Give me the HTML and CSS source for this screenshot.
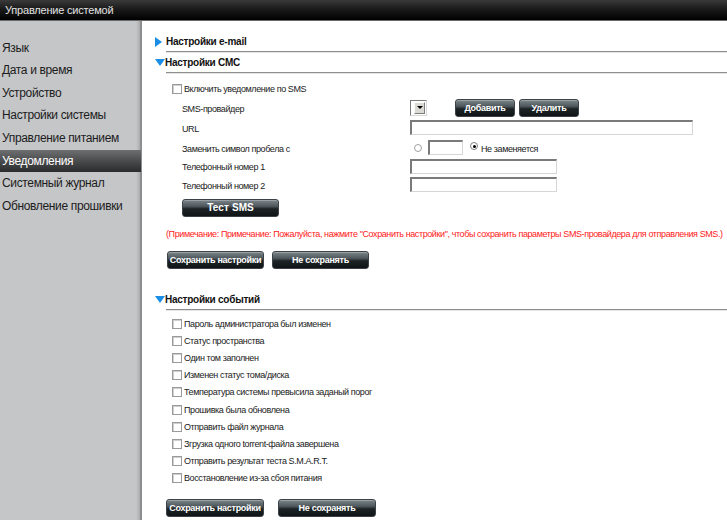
FILE: index.html
```html
<!DOCTYPE html>
<html lang="ru">
<head>
<meta charset="utf-8">
<title>Управление системой</title>
<link rel="stylesheet" href="styles.css">
</head>
<body>
<div class="page">
  <header class="topbar">Управление системой</header>
  <div class="layout">
    <nav class="sidebar">
      <div class="nav-item">Язык</div>
      <div class="nav-item">Дата и время</div>
      <div class="nav-item">Устройство</div>
      <div class="nav-item">Настройки системы</div>
      <div class="nav-item">Управление питанием</div>
      <div class="nav-item active">Уведомления</div>
      <div class="nav-item">Системный журнал</div>
      <div class="nav-item">Обновление прошивки</div>
    </nav>
    <main class="main">
      <section class="sec">
        <div class="sec-head"><span class="tri tri-right"></span><span class="sec-title">Настройки e-mail</span></div>
        <div class="rule"></div>
      </section>

      <section class="sec">
        <div class="sec-head open"><span class="tri tri-down"></span><span class="sec-title">Настройки СМС</span></div>
        <div class="rule"></div>
        <div class="check-row enable"><span class="cb"></span><span>Включить уведомление по SMS</span></div>
        <div class="form">
          <div class="frow r-provider">
            <span class="flabel">SMS-провайдер</span>
            <div class="fctrl">
              <span class="select"><span class="select-btn"><span class="arrow"></span></span></span>
              <span class="btn-pair">
                <button class="btn btn-add">Добавить</button>
                <button class="btn btn-add">Удалить</button>
              </span>
            </div>
          </div>
          <div class="frow r-url">
            <span class="flabel">URL</span>
            <div class="fctrl"><span class="input input-url"></span></div>
          </div>
          <div class="frow r-replace">
            <span class="flabel">Заменить символ пробела с</span>
            <div class="fctrl">
              <span class="radio"></span>
              <span class="input input-char"></span>
              <span class="radio checked"></span>
              <span class="radio-label">Не заменяется</span>
            </div>
          </div>
          <div class="frow r-phone1">
            <span class="flabel">Телефонный номер 1</span>
            <div class="fctrl"><span class="input input-phone"></span></div>
          </div>
          <div class="frow r-phone2">
            <span class="flabel">Телефонный номер 2</span>
            <div class="fctrl"><span class="input input-phone"></span></div>
          </div>
        </div>
        <div class="test-row"><button class="btn btn-test">Тест SMS</button></div>
        <p class="note">(Примечание: Примечание: Пожалуйста, нажмите "Сохранить настройки", чтобы сохранить параметры SMS-провайдера для отправления SMS.)</p>
        <div class="actions actions-sms">
          <button class="btn btn-wide">Сохранить настройки</button>
          <button class="btn btn-wide">Не сохранять</button>
        </div>
      </section>

      <section class="sec events">
        <div class="sec-head open"><span class="tri tri-down"></span><span class="sec-title">Настройки событий</span></div>
        <div class="rule"></div>
        <div class="event-list">
          <div class="check-row"><span class="cb"></span><span>Пароль администратора был изменен</span></div>
          <div class="check-row"><span class="cb"></span><span>Статус пространства</span></div>
          <div class="check-row"><span class="cb"></span><span>Один том заполнен</span></div>
          <div class="check-row"><span class="cb"></span><span>Изменен статус тома/диска</span></div>
          <div class="check-row"><span class="cb"></span><span>Температура системы превысила заданый порог</span></div>
          <div class="check-row"><span class="cb"></span><span>Прошивка была обновлена</span></div>
          <div class="check-row"><span class="cb"></span><span>Отправить файл журнала</span></div>
          <div class="check-row"><span class="cb"></span><span>Згрузка одного torrent-файла завершена</span></div>
          <div class="check-row"><span class="cb"></span><span>Отправить результат теста S.M.A.R.T.</span></div>
          <div class="check-row"><span class="cb"></span><span>Восстановление из-за сбоя питания</span></div>
        </div>
        <div class="actions actions-events">
          <button class="btn btn-wide2">Сохранить настройки</button>
          <button class="btn btn-wide2">Не сохранять</button>
        </div>
      </section>
    </main>
  </div>
</div>
</body>
</html>
```

FILE: styles.css
```css
* { box-sizing: border-box; }
html, body {
  margin: 0;
  padding: 0;
  width: 727px;
  height: 520px;
  overflow: hidden;
  background: #ffffff;
  font-family: "Liberation Sans", Arial, sans-serif;
  color: #1a1a1a;
}
.page {
  display: flex;
  flex-direction: column;
  height: 520px;
}
.topbar {
  height: 21px;
  flex: 0 0 21px;
  background: linear-gradient(#3a3a3a 0%, #1a1a1a 45%, #000000 100%);
  border-bottom: 1px solid #6a6a6a;
  color: #e2e2e2;
  font-size: 11px;
  letter-spacing: -0.2px;
  line-height: 20px;
  padding-left: 5px;
}
.layout {
  display: flex;
  flex: 1;
  min-height: 0;
}
.sidebar {
  width: 142px;
  flex: 0 0 142px;
  background: linear-gradient(to right, #c5c6c8 0, #c5c6c8 136px, #b9babc 138px, #a9aaac 140px, #8d8e90 140px, #8d8e90 142px);
  padding-top: 15.7px;
}
.nav-item {
  height: 22.6px;
  line-height: 22.6px;
  font-size: 12px;
  letter-spacing: -0.35px;
  padding-left: 2px;
  color: #1c1c1c;
  white-space: nowrap;
  width: 141px;
}
.nav-item.active {
  background: linear-gradient(#6e6f71 0%, #4a4b4d 50%, #2a2b2c 100%);
  color: #ffffff;
}
.main {
  flex: 1;
  padding-top: 11px;
  min-width: 0;
}
.sec-head {
  height: 19px;
  display: flex;
  align-items: center;
  padding-left: 13px;
  font-size: 10px;
  letter-spacing: -0.25px;
  font-weight: bold;
  color: #111;
}
.tri {
  display: inline-block;
  width: 0;
  height: 0;
}
.tri-right {
  border-top: 5px solid transparent;
  border-bottom: 5px solid transparent;
  border-left: 7px solid #1a8ee6;
  margin-right: 4px;
}
.tri-down {
  border-left: 5px solid transparent;
  border-right: 5px solid transparent;
  border-top: 7px solid #1a8ee6;
  margin-right: 0;
  margin-top: -1px;
}
.rule {
  margin-left: 24px;
  border-top: 1px solid #8e8e8e;
  border-bottom: 1px solid #e4e4e4;
  height: 0;
}
.check-row {
  display: flex;
  align-items: center;
  font-size: 9px;
  letter-spacing: -0.4px;
  color: #1a1a1a;
  margin-left: 30px;
  height: 18px;
}
.enable {
  margin-top: 6px;
}
.cb {
  width: 10px;
  height: 10px;
  border: 1px solid #9a9a9a;
  box-shadow: inset 1px 1px 0 #cfcfcf;
  background: #ffffff;
  margin-right: 2px;
  flex: 0 0 10px;
}
.form {
  margin-left: 40px;
  font-size: 9px;
  letter-spacing: -0.4px;
}
.frow {
  display: grid;
  grid-template-columns: 228px 1fr;
  align-items: center;
}
.flabel {
  padding-top: 2px;
}
.r-provider { height: 19px; }
.r-url { height: 21px; }
.r-replace { height: 19px; }
.r-phone1 { height: 18px; }
.r-phone2 { height: 19px; }
.fctrl {
  display: flex;
  align-items: center;
}
.select {
  width: 17px;
  height: 16px;
  border-top: 1px solid #7a7a7a;
  border-left: 1px solid #7a7a7a;
  border-right: 1px solid #d8d8d8;
  border-bottom: 1px solid #d8d8d8;
  background: #fff;
  display: flex;
  justify-content: flex-end;
  align-items: center;
  padding: 1px;
}
.select-btn {
  width: 11px;
  height: 12px;
  background: #dcdad4;
  border: 1px solid;
  border-color: #fafafa #7d7d7d #7d7d7d #fafafa;
  display: flex;
  align-items: center;
  justify-content: center;
}
.arrow {
  width: 0;
  height: 0;
  border-left: 3px solid transparent;
  border-right: 3px solid transparent;
  border-top: 3px solid #000;
}
.btn-pair {
  display: flex;
  gap: 4px;
  margin-left: 28px;
}
.btn {
  font-family: "Liberation Sans", Arial, sans-serif;
  font-weight: bold;
  font-size: 9px;
  letter-spacing: -0.3px;
  color: #ffffff;
  border: 1px solid #3c4247;
  border-radius: 3px;
  background: linear-gradient(#7c8589 0%, #4d565b 40%, #1d2326 55%, #101416 100%);
  padding: 0;
  height: 18px;
  line-height: 16px;
  text-align: center;
  white-space: nowrap;
  box-shadow: inset 0 1px 0 rgba(255,255,255,0.25);
}
.btn-add { width: 60px; }
.input {
  display: inline-block;
  height: 15px;
  background: #fff;
  border-top: 2px solid #7a7a7a;
  border-left: 2px solid #7a7a7a;
  border-right: 1px solid #d6d6d6;
  border-bottom: 1px solid #d6d6d6;
}
.input-url { width: 283px; }
.input-char { width: 35px; margin-left: 6px; }
.input-phone { width: 147px; }
.radio {
  width: 8px;
  height: 8px;
  border-radius: 50%;
  border: 1px solid #a0a0a0;
  background: #fff;
  margin-left: 4px;
  display: inline-block;
  position: relative;
}
.radio.checked {
  margin-left: 7px;
  border-color: #808080;
  margin-top: -3px;
}
.radio.checked::after {
  content: "";
  position: absolute;
  left: 1.5px;
  top: 1.5px;
  width: 3px;
  height: 3px;
  border-radius: 50%;
  background: #000;
}
.radio-label {
  margin-left: 3px;
  padding-top: 2px;
}
.test-row {
  margin-left: 40px;
  margin-top: 3px;
}
.btn-test {
  width: 97px;
  font-size: 10px;
  letter-spacing: 0.1px;
}
.note {
  margin: 10px 0 0 24px;
  height: 14px;
  line-height: 14px;
  font-size: 9px;
  letter-spacing: -0.4px;
  color: #ff1a1a;
  white-space: nowrap;
}
.actions {
  display: flex;
}
.actions-sms {
  margin-left: 25px;
  margin-top: 10px;
  gap: 8px;
}
.btn-wide { width: 97px; }
.events {
  margin-top: 21px;
}
.event-list {
  margin-top: 4px;
}
.event-list .check-row {
  height: 17.2px;
}
.actions-events {
  margin-left: 24px;
  margin-top: 12px;
  gap: 14px;
}
.btn-wide2 { width: 98px; }
```
